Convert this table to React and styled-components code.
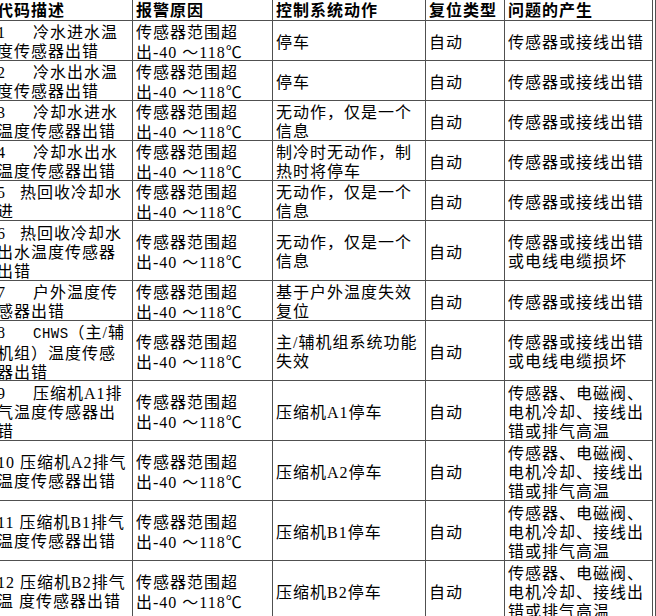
import React from "react";
import styled, { createGlobalStyle } from "styled-components";

const GlobalStyle = createGlobalStyle`
  html, body {
    margin: 0;
    padding: 0;
    background: #fff;
    overflow: hidden;
  }
`;

const Page = styled.div`
  width: 656px;
  height: 616px;
  overflow: hidden;
`;

const Table = styled.div`
  display: grid;
  grid-template-columns: 139px 140px 153px 79px 148px;
  grid-template-rows: ${({ $rows }) => $rows.map((h) => `${h}px`).join(" ")};
  width: max-content;
  margin: -1px 0 0 -7px;
  padding-right: 2px;
  border-top: 1px solid #505050;
  border-left: 1px solid #505050;
  border-right: 1px solid #505050;
  font-family: "Liberation Serif", "Noto Sans CJK SC", serif;
  font-size: 16px;
  line-height: 19px;
  letter-spacing: 1px;
  color: #000;
`;

const Cell = styled.div`
  display: flex;
  flex-direction: column;
  justify-content: center;
  padding: ${({ $head }) => ($head ? "0 2px 0 3px" : "3px 2px 0 3px")};
  border-right: 1px solid #505050;
  border-bottom: 1px solid #505050;
  font-weight: ${({ $head }) => ($head ? 700 : 400)};
  overflow: hidden;
`;

const Line = styled.span`
  display: block;
  white-space: pre;
`;

const Narrow = styled.span`
  font-family: "Liberation Mono", monospace;
  font-size: 14px;
  letter-spacing: 0.5px;
`;

const Cjk = styled.span`
  font-family: "Noto Sans CJK SC", sans-serif;
`;

const headers = ["代码描述", "报警原因", "控制系统动作", "复位类型", "问题的产生"];

const range = [
  "传感器范围超",
  <>
    出-40 ～118<Cjk>℃</Cjk>
  </>,
];
const sensor = ["传感器或接线出错"];
const cable = ["传感器或接线出错", "或电线电缆损坏"];
const compressor = ["传感器、电磁阀、", "电机冷却、接线出", "错或排气高温"];
const infoOnly = ["无动作，仅是一个", "信息"];

const rows = [
  { h: 40, code: ["1\u2002\u2002\u2002冷水进水温", "度传感器出错"], action: ["停车"], cause: sensor },
  { h: 40, code: ["2\u2002\u2002\u2002冷水出水温", "度传感器出错"], action: ["停车"], cause: sensor },
  { h: 40, code: ["3\u2002\u2002\u2002冷却水进水", "温度传感器出错"], action: infoOnly, cause: sensor },
  { h: 40, code: ["4\u2002\u2002\u2002冷却水出水", "温度传感器出错"], action: ["制冷时无动作，制", "热时将停车"], cause: sensor },
  { h: 40, code: ["5\u2002 热回收冷却水", "进"], action: infoOnly, cause: sensor },
  { h: 60, code: ["6\u2002 热回收冷却水", "出水温度传感器", "出错"], action: infoOnly, cause: cable },
  { h: 40, code: ["7\u2002\u2002\u2002户外温度传", "感器出错"], action: ["基于户外温度失效", "复位"], cause: sensor },
  {
    h: 60,
    code: [
      <>
        8{"\u2002\u2002\u2002"}
        <Narrow>CHWS</Narrow>（主/辅
      </>,
      "机组）温度传感",
      "器出错",
    ],
    action: ["主/辅机组系统功能", "失效"],
    cause: cable,
  },
  { h: 60, code: ["9\u2002\u2002\u2002压缩机A1排", "气温度传感器出", "错"], action: ["压缩机A1停车"], cause: compressor },
  { h: 60, code: ["10 压缩机A2排气", "温度传感器出错"], action: ["压缩机A2停车"], cause: compressor },
  { h: 60, code: ["11 压缩机B1排气", "温度传感器出错"], action: ["压缩机B1停车"], cause: compressor },
  { h: 60, code: ["12 压缩机B2排气", "温 度传感器出错"], action: ["压缩机B2停车"], cause: compressor },
];

function Lines({ items }) {
  return items.map((text, i) => <Line key={i}>{text}</Line>);
}

export default function App() {
  return (
    <Page>
      <GlobalStyle />
      <Table $rows={[21, ...rows.map((r) => r.h)]}>
        {headers.map((h) => (
          <Cell $head key={h}>
            <Line>{h}</Line>
          </Cell>
        ))}
        {rows.map((r, i) => (
          <React.Fragment key={i}>
            <Cell>
              <Lines items={r.code} />
            </Cell>
            <Cell>
              <Lines items={range} />
            </Cell>
            <Cell>
              <Lines items={r.action} />
            </Cell>
            <Cell>
              <Line>自动</Line>
            </Cell>
            <Cell>
              <Lines items={r.cause} />
            </Cell>
          </React.Fragment>
        ))}
      </Table>
    </Page>
  );
}
